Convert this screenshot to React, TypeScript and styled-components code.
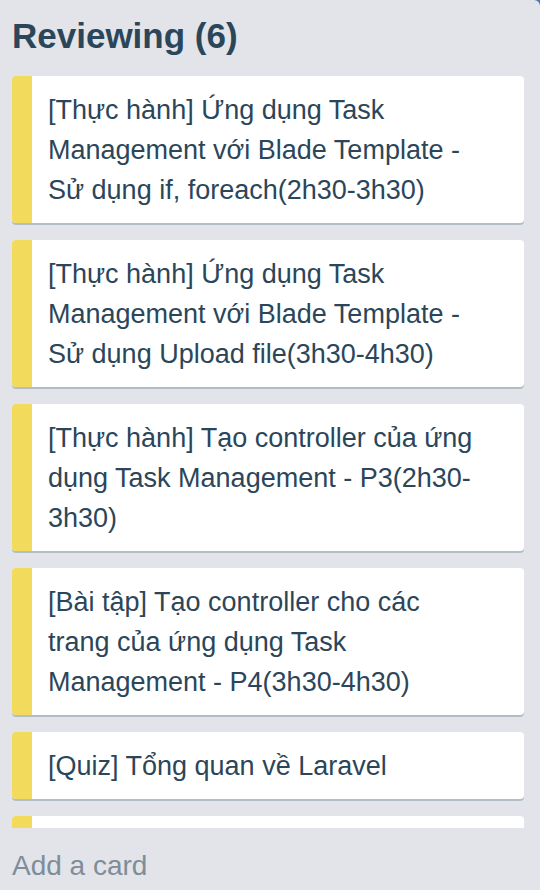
import React from "react";
import styled, { createGlobalStyle } from "styled-components";

const GlobalStyle = createGlobalStyle`
  html, body {
    margin: 0;
    padding: 0;
    background: #4a76ad;
  }
  * { box-sizing: border-box; }
`;

const List = styled.div`
  width: 540px;
  height: 890px;
  background: #e2e4e9;
  border-top-right-radius: 6px;
  display: flex;
  flex-direction: column;
  overflow: hidden;
  font-family: "Liberation Sans", Arial, "Noto Sans", sans-serif;
`;

const Header = styled.h2`
  margin: 0;
  padding: 16px 12px 20px;
  font-size: 35px;
  line-height: 40px;
  font-weight: 700;
  color: #2c4659;
`;

const Cards = styled.div`
  height: 752px;
  overflow: hidden;
  padding: 0 16px 0 12px;
  display: flex;
  flex-direction: column;
  gap: 17px;
  flex-shrink: 0;
`;

const Card = styled.div`
  display: flex;
  flex-shrink: 0;
  min-height: 67px;
  background: #ffffff;
  border-radius: 4px;
  overflow: hidden;
  box-shadow: 0 2px 0 #b3bdc5;
`;

const Stripe = styled.div<{ $color: string }>`
  width: 20px;
  flex-shrink: 0;
  background: ${(p) => p.$color};
`;

const CardText = styled.div`
  padding: 14px 40px 13px 16px;
  font-size: 27px;
  line-height: 40px;
  color: #2c4659;
  flex: 1;
`;

const Footer = styled.div`
  padding: 18px 12px 0;
  font-size: 28px;
  line-height: 40px;
  color: #7f8d98;
`;

const cards = [
  "[Thực hành] Ứng dụng Task Management với Blade Template - Sử dụng if, foreach(2h30-3h30)",
  "[Thực hành] Ứng dụng Task Management với Blade Template - Sử dụng Upload file(3h30-4h30)",
  "[Thực hành] Tạo controller của ứng dụng Task Management - P3(2h30-\u200B3h30)",
  "[Bài tập] Tạo controller cho các trang của ứng dụng Task Management - P4(3h30-4h30)",
  "[Quiz] Tổng quan về Laravel",
  "",
];

export default function App() {
  return (
    <>
      <GlobalStyle />
      <List>
        <Header>Reviewing (6)</Header>
        <Cards>
          {cards.map((t, i) => (
            <Card key={i}>
              <Stripe $color="#f2da5c" />
              <CardText>{t}</CardText>
            </Card>
          ))}
        </Cards>
        <Footer>Add a card</Footer>
      </List>
    </>
  );
}
